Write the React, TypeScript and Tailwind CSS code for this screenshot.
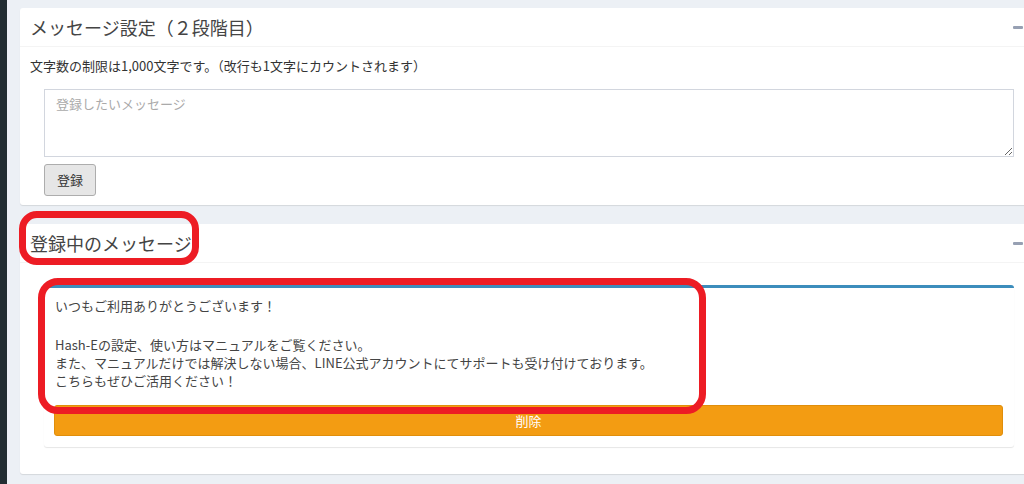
import React from "react";

function Minus() {
  return <span className="block w-[10px] h-[3px] bg-[#97a0b3] rounded-[1px]" />;
}

export default function App() {
  return (
    <div className="w-[1024px] h-[484px] overflow-hidden flex bg-[#ecf0f5] font-['Noto_Sans_CJK_JP','Noto_Sans',sans-serif] text-[#333]">
      <div className="w-[7px] shrink-0 bg-[#222d32]" />
      <main className="relative shrink-0 w-[1030px] pl-[13px] pt-[8px]">
        {/* message settings */}
        <section className="w-[1016px] bg-white rounded-[3px] shadow-[0_1px_1px_rgba(0,0,0,0.1)]">
          <div className="h-[39px] flex items-center justify-between pl-[10px] pr-[13px] border-b border-[#f4f4f4]">
            <h3 className="text-[18px] leading-[20px] text-[#444]">メッセージ設定（２段階目）</h3>
            <Minus />
          </div>
          <div className="pl-[10px] pr-[10px] pt-[10px] pb-[9px]">
            <p className="text-[13px] leading-[18px]">文字数の制限は1,000文字です。（改行も1文字にカウントされます）</p>
            <form className="ml-[14px] mr-[12px] mt-[14px]">
              <textarea
                placeholder="登録したいメッセージ"
                className="block w-full h-[68px] border border-[#d2d6de] px-[11px] py-[5px] text-[13px] leading-[18px] placeholder:text-[#aaa] outline-none"
              />
              <button type="button" className="mt-[7px] h-[32px] px-[12px] bg-[#e6e6e6] border border-[#adadad] rounded-[3px] text-[13px] text-[#333]">
                登録
              </button>
            </form>
          </div>
        </section>

        {/* registered message */}
        <section className="mt-[19px] w-[1016px] bg-white rounded-[3px] shadow-[0_1px_1px_rgba(0,0,0,0.1)]">
          <div className="h-[39px] flex items-center justify-between pl-[10px] pr-[13px] border-b border-[#f4f4f4]">
            <h3 className="text-[18px] leading-[20px] text-[#444]">登録中のメッセージ</h3>
            <Minus />
          </div>
          <div className="pl-[10px] pr-[10px] pt-[22px] pb-[27px]">
            <div className="ml-[14px] mr-[12px] border-t-[3px] border-[#3c8dbc] rounded-[3px] shadow-[0_1px_1px_rgba(0,0,0,0.1)] bg-white pl-[10px] pr-[11px] pt-[9px] pb-[11px]">
              <div className="pl-[1px] text-[13px] leading-[18px] text-[#444]">
                <p>いつもご利用ありがとうございます！</p>
                <p className="mt-[21px]">Hash-Eの設定、使い方はマニュアルをご覧ください。</p>
                <p>また、マニュアルだけでは解決しない場合、LINE公式アカウントにてサポートも受け付けております。</p>
                <p>こちらもぜひご活用ください！</p>
              </div>
              <button type="button" className="mt-[15px] w-full h-[31px] bg-[#f39c12] border border-[#e08e0b] rounded-[3px] text-[13px] text-white">
                削除
              </button>
            </div>
          </div>
        </section>

        {/* annotations */}
        <div className="absolute left-[12px] top-[211px] w-[180px] h-[54px] border-[7px] border-[#ed1c24] rounded-[18px]" />
        <div className="absolute left-[31px] top-[278px] w-[668px] h-[136px] border-[7px] border-[#ed1c24] rounded-[20px]" />
      </main>
    </div>
  );
}
